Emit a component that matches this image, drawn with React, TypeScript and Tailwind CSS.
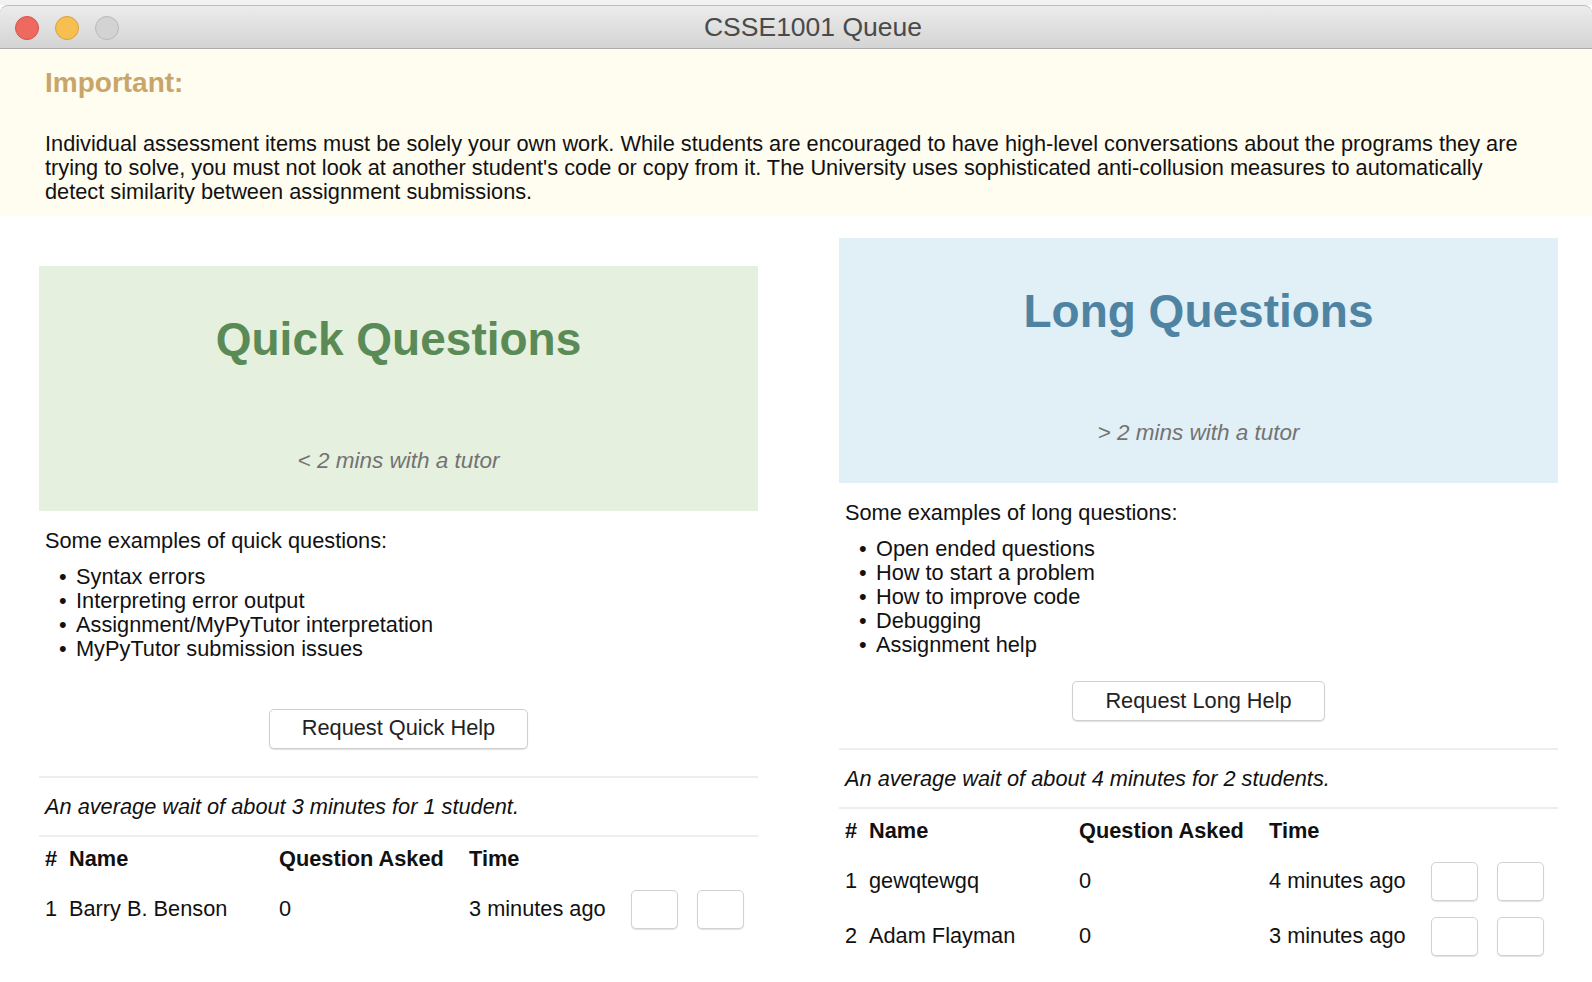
import React from 'react'

const font = { fontFamily: '"Liberation Sans", Arial, Helvetica, sans-serif' }

type Student = { n: number; name: string; asked: string; time: string }

const Column = ({
  title,
  subtitle,
  cardBg,
  titleColor,
  examplesLabel,
  examples,
  buttonLabel,
  wait,
  students,
}: {
  title: string
  subtitle: string
  cardBg: string
  titleColor: string
  examplesLabel: string
  examples: string[]
  buttonLabel: string
  wait: string
  students: Student[]
}) => {
  return (
    <div className="w-[719px] flex flex-col">
      <div className={`h-[245px] flex flex-col items-center pt-[48px] ${cardBg}`}>
        <h2 className={`text-[46px] leading-[50px] font-bold ${titleColor}`}>{title}</h2>
        <p className="mt-[83px] text-[22.5px] leading-[28px] italic text-[#737373]">{subtitle}</p>
      </div>

      <div className="h-[198px] pl-[6px] pt-[18px]">
        <p className="leading-[24px]">{examplesLabel}</p>
        <ul className="mt-[12px]">
          {examples.map((item) => (
            <li key={item} className="flex leading-[24px] pl-[14px]">
              <span className="w-[17px]">•</span>
              <span>{item}</span>
            </li>
          ))}
        </ul>
      </div>

      <div className="flex justify-center">
        <button className="h-[40px] px-[32px] bg-white border border-[#cfcfcf] rounded-[5px] shadow-[0_1px_1px_rgba(0,0,0,0.12)] text-[#222]">
          {buttonLabel}
        </button>
      </div>

      <div className="mt-[27px] h-[2px] bg-[#eeeeee]" />
      <p className="pl-[6px] mt-[17px] leading-[24px] italic">{wait}</p>
      <div className="mt-[16px] h-[2px] bg-[#eeeeee]" />

      <div className="pl-[6px] mt-[10px] flex leading-[24px] font-bold">
        <span className="w-[24px]">#</span>
        <span className="w-[210px]">Name</span>
        <span className="w-[190px]">Question Asked</span>
        <span className="w-[162px]">Time</span>
      </div>
      <div className="mt-[11px]">
        {students.map((s) => (
          <div key={s.n} className="pl-[6px] h-[55px] flex items-center">
            <span className="w-[24px]">{s.n}</span>
            <span className="w-[210px]">{s.name}</span>
            <span className="w-[190px]">{s.asked}</span>
            <span className="w-[162px]">{s.time}</span>
            <div className="flex gap-[19px]">
              <button className="w-[47px] h-[39px] bg-white border border-[#d2d2d2] rounded-[5px] shadow-[0_1px_1px_rgba(0,0,0,0.12)]" />
              <button className="w-[47px] h-[39px] bg-white border border-[#d2d2d2] rounded-[5px] shadow-[0_1px_1px_rgba(0,0,0,0.12)]" />
            </div>
          </div>
        ))}
      </div>
    </div>
  )
}

export default function App() {
  return (
    <div style={font} className="w-[1592px] h-[982px] bg-white text-[21.75px] text-[#111] overflow-hidden">
      {/* window chrome */}
      <div className="h-[5px] bg-[#f2f2f2]" />
      <div className="h-[44px] relative flex items-center justify-center rounded-t-[8px] border-t border-b border-t-[#bdbdbd] border-b-[#acacac] bg-gradient-to-b from-[#ececec] to-[#d4d4d4]">
        <div className="absolute left-[15px] top-[10px] flex gap-[16px]">
          <span className="w-[24px] h-[24px] rounded-full bg-[#ee6a5e] border border-[#d5544b]" />
          <span className="w-[24px] h-[24px] rounded-full bg-[#f6bf4f] border border-[#d9a13b]" />
          <span className="w-[24px] h-[24px] rounded-full bg-[#d3d3d3] border border-[#b9b9b9]" />
        </div>
        <span className="text-[26.5px] text-[#4a4a4a] ml-[34px] pt-[2px]">CSSE1001 Queue</span>
      </div>

      {/* notice */}
      <div className="bg-[#fffcf0] pl-[45px] pr-[62px] pt-[18px] pb-[12px]">
        <h3 className="text-[28px] leading-[31px] font-bold text-[#c8a66a]">Important:</h3>
        <p className="mt-[34px] leading-[24px]">
          Individual assessment items must be solely your own work. While students are encouraged to have high-level
          conversations about the programs they are trying to solve, you must not look at another student's code or copy
          from it. The University uses sophisticated anti-collusion measures to automatically detect similarity between
          assignment submissions.
        </p>
      </div>

      {/* queues */}
      <div className="flex items-center gap-[81px] pl-[39px] pr-[34px] pt-[22px]">
        <Column
          title="Quick Questions"
          subtitle="< 2 mins with a tutor"
          cardBg="bg-[#e5f0df]"
          titleColor="text-[#5a8a55]"
          examplesLabel="Some examples of quick questions:"
          examples={[
            'Syntax errors',
            'Interpreting error output',
            'Assignment/MyPyTutor interpretation',
            'MyPyTutor submission issues',
          ]}
          buttonLabel="Request Quick Help"
          wait="An average wait of about 3 minutes for 1 student."
          students={[{ n: 1, name: 'Barry B. Benson', asked: '0', time: '3 minutes ago' }]}
        />
        <Column
          title="Long Questions"
          subtitle="> 2 mins with a tutor"
          cardBg="bg-[#e1eff7]"
          titleColor="text-[#4f83a2]"
          examplesLabel="Some examples of long questions:"
          examples={['Open ended questions', 'How to start a problem', 'How to improve code', 'Debugging', 'Assignment help']}
          buttonLabel="Request Long Help"
          wait="An average wait of about 4 minutes for 2 students."
          students={[
            { n: 1, name: 'gewqtewgq', asked: '0', time: '4 minutes ago' },
            { n: 2, name: 'Adam Flayman', asked: '0', time: '3 minutes ago' },
          ]}
        />
      </div>
    </div>
  )
}
